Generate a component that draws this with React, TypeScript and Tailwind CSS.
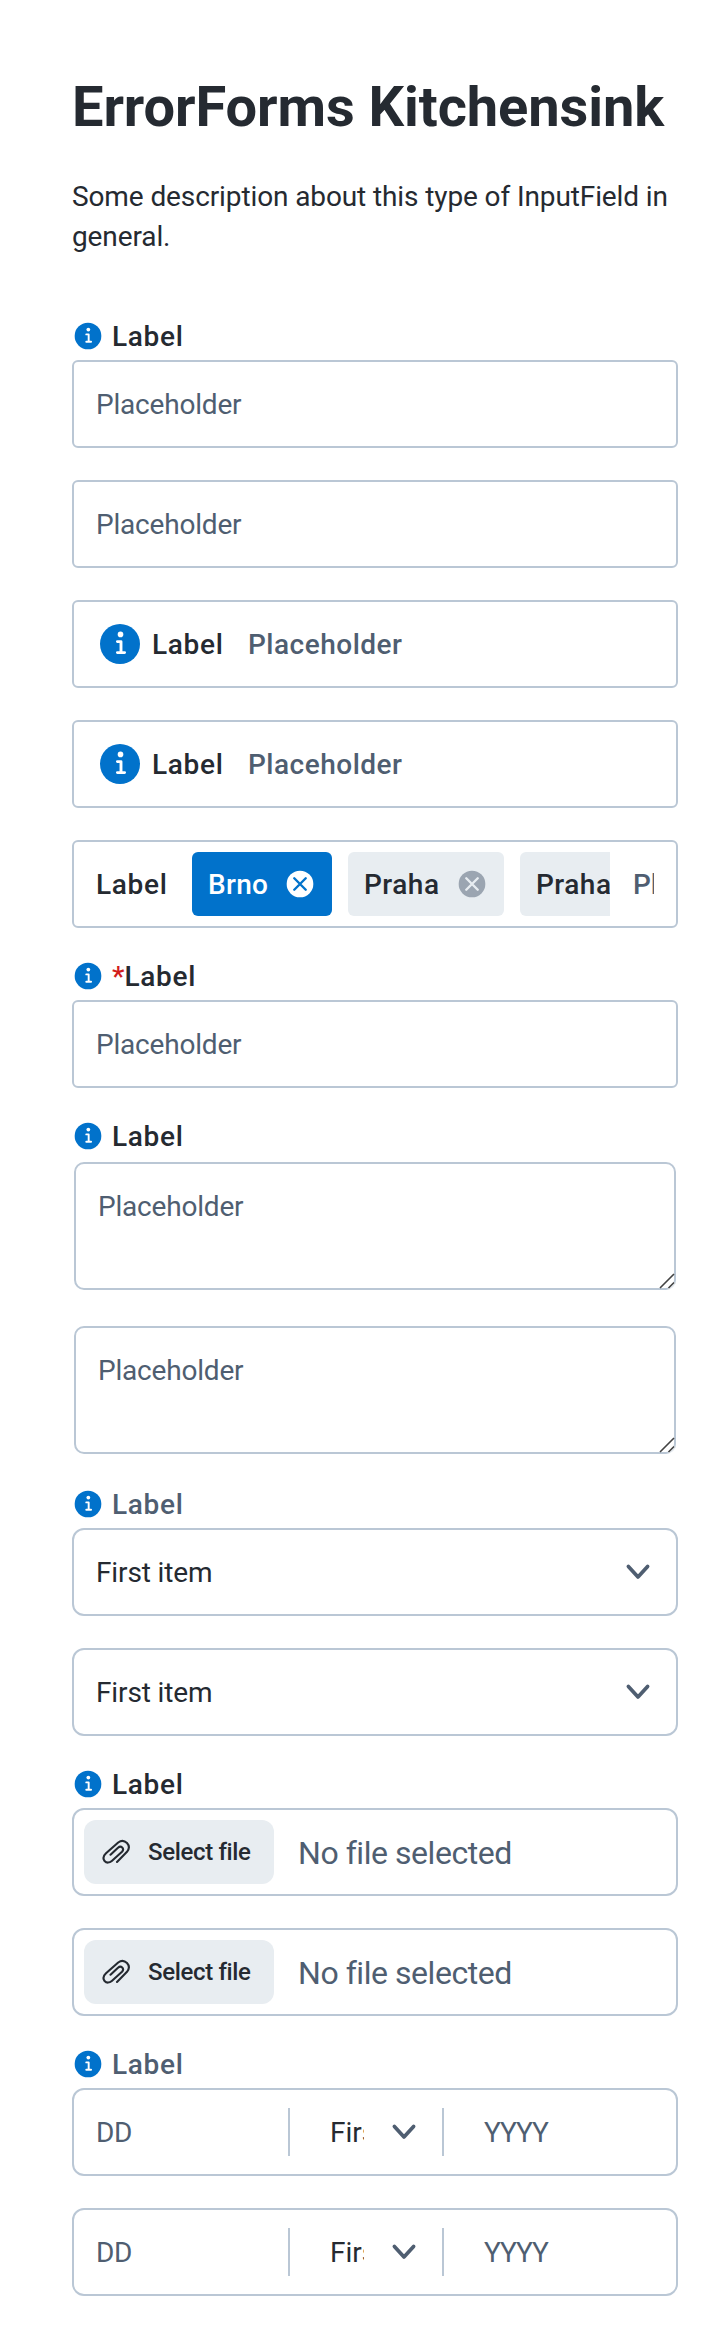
import React from "react";

const field =
  "flex h-[88px] items-center overflow-hidden border-2 border-[#bac7d5] bg-white text-[28px] leading-10";

function InfoIcon({ className }: { className: string }) {
  return (
    <svg viewBox="0 0 24 24" className={className}>
      <circle cx="12" cy="12" r="10" fill="#0172cb" />
      <circle cx="12.25" cy="7.2" r="1.4" fill="#fff" />
      <path d="M10.7 10.8h1.8v5.5M10.7 16.3h3.6" fill="none" stroke="#fff" strokeWidth="1.45" strokeLinecap="round" strokeLinejoin="round" />
    </svg>
  );
}

function CloseCircle({ circle, cross }: { circle: string; cross: string }) {
  return (
    <svg viewBox="0 0 24 24" className="size-8 shrink-0">
      <circle cx="12" cy="12" r="10" fill={circle} />
      <path d="M7.7 7.7l8.6 8.6M16.3 7.7l-8.6 8.6" stroke={cross} strokeWidth="1.8" strokeLinecap="round" />
    </svg>
  );
}

function Chevron() {
  return (
    <svg viewBox="0 0 48 48" className="size-12 shrink-0">
      <path d="M14.4 18.4l9.6 10.6 9.6-10.6" fill="none" stroke="#4f5e71" strokeWidth="3.7" strokeLinecap="round" strokeLinejoin="round" />
    </svg>
  );
}

function Label({ muted, required }: { muted?: boolean; required?: boolean }) {
  return (
    <div className="flex h-10 items-center gap-2 pb-2 text-[28px] leading-8 font-medium tracking-[0.7px]">
      <InfoIcon className="size-8 shrink-0" />
      <span className={muted ? "pt-0.5 text-[#4f5e71]" : "pt-0.5 text-[#252a31]"}>
        {required && <span className="tracking-normal text-[#d21c1c]">*</span>}
        Label
      </span>
    </div>
  );
}

function Input() {
  return (
    <div className={`${field} rounded-[6px] px-[22px] tracking-[-0.2px] text-[#4f5e71]`}>
      <span className="pt-0.5">Placeholder</span>
    </div>
  );
}

function InlineInput() {
  return (
    <div className={`${field} rounded-[6px] px-[22px] font-medium`}>
      <InfoIcon className="mr-2 size-12 shrink-0" />
      <span className="w-24 shrink-0 pt-0.5 tracking-[0.7px] text-[#252a31]">Label</span>
      <span className="pt-0.5 tracking-[0.5px] text-[#4f5e71]">Placeholder</span>
    </div>
  );
}

function Tag({ text, selected }: { text: string; selected?: boolean }) {
  return (
    <div
      className={`flex h-16 shrink-0 items-center justify-between rounded-[6px] px-4 ${
        selected
          ? "w-[140px] bg-[#0172cb] tracking-[0.3px] text-white"
          : "w-[156px] bg-[#e8edf1] tracking-[0.5px] text-[#252a31]"
      }`}
    >
      <span className="pt-0.5">{text}</span>
      {selected ? <CloseCircle circle="#fff" cross="#0172cb" /> : <CloseCircle circle="#9ba5b1" cross="#e8edf1" />}
    </div>
  );
}

function TagsInput() {
  return (
    <div className={`${field} rounded-[6px] pl-[22px] font-medium`}>
      <span className="w-24 shrink-0 pt-0.5 tracking-[0.7px] text-[#252a31]">Label</span>
      <div className="flex w-[418px] shrink-0 gap-4 overflow-hidden">
        <Tag text="Brno" selected />
        <Tag text="Praha" />
        <Tag text="Praha" />
      </div>
      <span className="ml-[23px] w-[21px] shrink-0 overflow-hidden pt-0.5 text-[#4f5e71]">Placeholder</span>
    </div>
  );
}

function Textarea() {
  return (
    <div className="p-0.5">
      <div className="relative h-32 rounded-[10px] border-2 border-[#bac7d5] bg-white px-[22px] pt-[23px] text-[28px] leading-10 tracking-[-0.2px] text-[#4f5e71]">
        Placeholder
        <svg viewBox="0 0 16 16" className="absolute -right-px -bottom-px size-4">
          <path d="M16 9v7H9z" fill="#fff" fillOpacity=".6" />
          <path d="M1 15L15 1M9.5 15l5.5-5.5" stroke="#444" strokeWidth="1.6" fill="none" />
        </svg>
      </div>
    </div>
  );
}

function Select() {
  return (
    <div className={`${field} justify-between rounded-[12px] pr-[14px] pl-[22px] text-[#252a31]`}>
      <span className="pt-0.5 tracking-[-0.13px]">First item</span>
      <Chevron />
    </div>
  );
}

function FileInput() {
  return (
    <div className={`${field} rounded-[12px] pl-[10px]`}>
      <div className="flex h-16 w-[190px] shrink-0 items-center gap-4 rounded-[12px] bg-[#e8edf1] pl-4 text-[24px] font-medium text-[#252a31]">
        <svg viewBox="0 0 32 32" className="size-8 shrink-0">
          <path
            d="M17 26L27 15.8C29.300 13 29.300 9.500 27 7C24.500 4.500 21 4.300 18.200 6.500L6 17.300C3.300 19.800 2.900 22.800 4.600 25C6.500 27.200 9.500 27 11.800 25L22 15.800C23.300 14.300 23.300 12.600 22.200 11.500C21 10.400 19.300 10.600 18 11.700L10.500 18.700"
            fill="none"
            stroke="#252a31"
            strokeWidth="2.1"
            strokeLinecap="round"
            strokeLinejoin="round"
          />
        </svg>
        <span className="tracking-[-0.35px] whitespace-nowrap">Select file</span>
      </div>
      <span className="ml-6 pt-0.5 text-[32px] tracking-[-0.45px] text-[#4f5e71]">No file selected</span>
    </div>
  );
}

function DateInput() {
  return (
    <div className={`${field} rounded-[12px] pl-[22px] text-[#4f5e71]`}>
      <span className="w-48 shrink-0 pt-0.5 tracking-[-0.4px]">DD</span>
      <div className="h-12 w-0.5 shrink-0 bg-[#bac7d5]" />
      <span className="ml-10 w-[34px] shrink-0 overflow-hidden pt-0.5 whitespace-nowrap text-[#252a31]">First item</span>
      <div className="mr-[14px] ml-4">
        <Chevron />
      </div>
      <div className="h-12 w-0.5 shrink-0 bg-[#bac7d5]" />
      <span className="ml-10 pt-0.5 tracking-[-1.1px]">YYYY</span>
    </div>
  );
}

export default function App() {
  return (
    <main className="h-[2336px] bg-white pt-[73px] pr-10 pl-[72px] font-['Roboto',sans-serif] text-[#252a31]">
      <h1 className="text-[56px] leading-[68px] font-bold tracking-[-0.07px] whitespace-nowrap">ErrorForms Kitchensink</h1>
      <p className="mt-9 text-[28px] leading-10 tracking-[-0.11px]">
        Some description about this type of InputField in general.
      </p>
      <div className="mt-[63px] flex flex-col gap-8">
        <div><Label /><Input /></div>
        <Input />
        <InlineInput />
        <InlineInput />
        <TagsInput />
        <div><Label required /><Input /></div>
        <div><Label /><Textarea /></div>
        <Textarea />
        <div><Label muted /><Select /></div>
        <Select />
        <div><Label /><FileInput /></div>
        <FileInput />
        <div><Label muted /><DateInput /></div>
        <DateInput />
      </div>
    </main>
  );
}
